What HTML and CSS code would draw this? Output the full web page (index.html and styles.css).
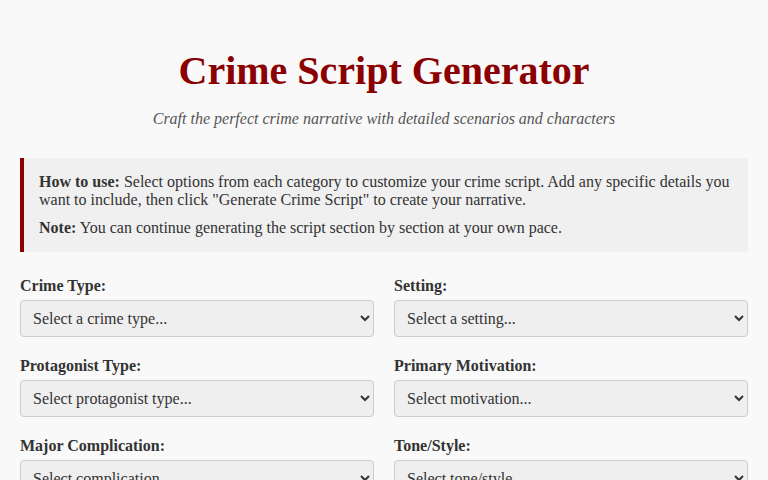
FILE: index.html
```html
<!DOCTYPE html>
<html lang="en">

<head>
  <meta charset="UTF-8">
  <meta name="viewport" content="width=device-width, initial-scale=1.0">
  <title>Crime Script Generator</title>

  <link rel="stylesheet" href="styles.css">
</head>

<body>
  <div class="container">
    <header class="page-header">
      <h1>Crime Script Generator</h1>
      <p class="subtitle">Craft the perfect crime narrative with detailed scenarios and characters</p>
    </header>

    <div class="instructions">
      <p><strong>How to use:</strong> Select options from each category to customize your crime script. Add any specific details you want to include, then click "Generate Crime Script" to create your narrative.</p>
      <p><strong>Note:</strong> You can continue generating the script section by section at your own pace.</p>
    </div>

    <form id="script-form" class="options-grid">
      <div class="form-group">
        <label for="crime-type">Crime Type:</label>
        <select id="crime-type" name="crime-type">
          <option value="">Select a crime type...</option>
        </select>
      </div>

      <div class="form-group">
        <label for="setting">Setting:</label>
        <select id="setting" name="setting">
          <option value="">Select a setting...</option>
        </select>
      </div>

      <div class="form-group">
        <label for="protagonist">Protagonist Type:</label>
        <select id="protagonist" name="protagonist">
          <option value="">Select protagonist type...</option>
        </select>
      </div>

      <div class="form-group">
        <label for="motivation">Primary Motivation:</label>
        <select id="motivation" name="motivation">
          <option value="">Select motivation...</option>
        </select>
      </div>

      <div class="form-group">
        <label for="complication">Major Complication:</label>
        <select id="complication" name="complication">
          <option value="">Select complication...</option>
        </select>
      </div>

      <div class="form-group">
        <label for="tone">Tone/Style:</label>
        <select id="tone" name="tone">
          <option value="">Select tone/style...</option>
        </select>
      </div>
    </form>
  </div>
</body>

</html>
```

FILE: styles.css
```css
body {
  font-family: "Liberation Serif", "Times New Roman", serif;
  background-color: #ffffff;
  color: #333;
  margin: 0;
}

.container {
  background-color: #f9f9f9;
  padding: 20px;
  border-radius: 10px;
  box-shadow: 0 0 10px rgba(0, 0, 0, 0.08);
  min-height: 100vh;
  box-sizing: border-box;
}

.page-header {
  text-align: center;
  margin-bottom: 30px;
}

h1 {
  font-size: 40px;
  color: #8b0000;
  margin: 27px 0 16px;
}

.subtitle {
  font-style: italic;
  color: #555;
  margin: 0;
}

.instructions {
  background-color: #f0f0f0;
  border-left: 4px solid #8b0000;
  padding: 15px;
  margin-bottom: 25px;
}

.instructions p {
  margin: 0 0 10px;
}

.instructions p:last-child {
  margin-bottom: 0;
}

.options-grid {
  display: grid;
  grid-template-columns: 1fr 1fr;
  column-gap: 20px;
  row-gap: 20px;
}

.form-group label {
  display: block;
  font-weight: bold;
  margin-bottom: 5px;
}

.form-group select {
  width: 100%;
  padding: 8px;
  font-family: inherit;
  font-size: 16px;
  color: #333;
  background-color: #efefef;
  border: 1px solid #ccc;
  border-radius: 4px;
}
```
